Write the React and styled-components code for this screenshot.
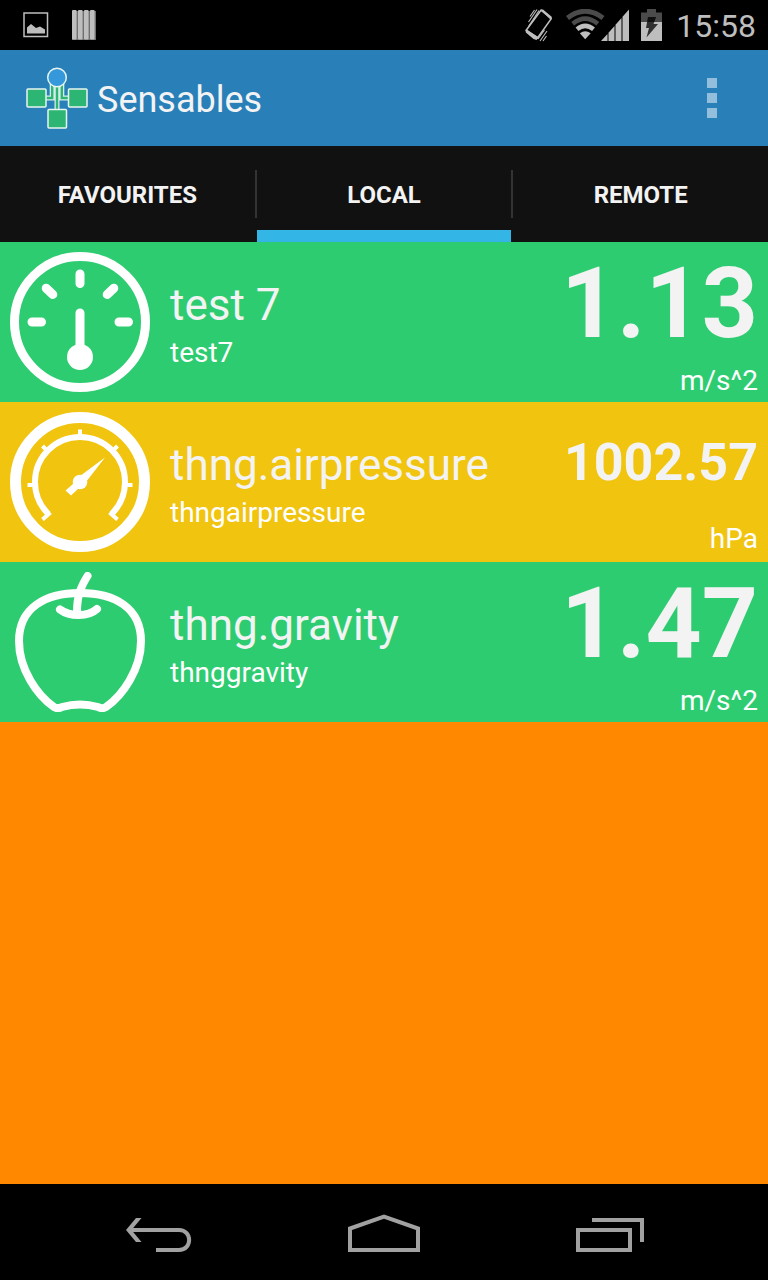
import React from "react";
import styled, { createGlobalStyle } from "styled-components";

const GlobalStyle = createGlobalStyle`
  *, *::before, *::after { box-sizing: border-box; }
  body {
    margin: 0;
    background: #000;
    font-family: Roboto, "Liberation Sans", sans-serif;
    color: #f3f3f3;
  }
  h1, h2, p, ul { margin: 0; padding: 0; }
  button { font: inherit; color: inherit; border: 0; padding: 0; background: none; cursor: pointer; }
  svg { display: block; flex: none; }
`;

const Screen = styled.div`
  display: flex;
  flex-direction: column;
  min-height: 100vh;
`;

const StatusBar = styled.header`
  display: flex;
  align-items: center;
  justify-content: space-between;
  height: 50px;
  padding: 0 12px 0 22px;
  background: #000;
  color: #bebebe;
`;

const StatusGroup = styled.div`
  display: flex;
  align-items: center;
  gap: ${(p) => p.$gap}px;
`;

const Clock = styled.time`
  font-size: 32px;
  line-height: 40px;
  padding: 2px 0 0 2px;
`;

const ActionBar = styled.div`
  display: flex;
  align-items: center;
  height: 96px;
  padding: 0 24px;
  background: #2980b9;
`;

const Title = styled.h1`
  flex: 1;
  padding: 4px 0 0 9px;
  font-size: 36px;
  line-height: 44px;
  font-weight: 400;
`;

const OverflowButton = styled.button`
  display: flex;
  flex-direction: column;
  align-items: center;
  gap: 5px;
  width: 64px;
`;

const Dot = styled.span`
  width: 10px;
  height: 10px;
  background: #94bfdc;
`;

const TabBar = styled.nav`
  display: flex;
  align-items: center;
  height: 96px;
  background: #111;
`;

const TabDivider = styled.span`
  width: 2px;
  height: 48px;
  background: #333;
`;

const Tab = styled.button`
  flex: 1 1 0;
  height: 96px;
  padding-top: 14px;
  border-bottom: 12px solid ${(p) => (p.$active ? "#33b5e5" : "transparent")};
  font-size: 24px;
  line-height: 28px;
  font-weight: 700;
  text-transform: uppercase;
`;

const Content = styled.main`
  flex: 1;
  background: #ff8800;
`;

const SensorList = styled.ul`
  list-style: none;
`;

const SensorRow = styled.li`
  display: flex;
  gap: 20px;
  height: 160px;
  padding: 0 10px;
  background: ${(p) => p.$tone};

  > svg { align-self: center; }
`;

const SensorInfo = styled.div`
  flex: 1;
  min-width: 0;
  padding-top: 37px;
`;

const SensorName = styled.h2`
  font-size: 44px;
  line-height: 52px;
  font-weight: 400;
`;

const SensorId = styled.p`
  font-size: 28px;
  line-height: 32px;
  padding-top: 6px;
  color: #fff;
`;

const Reading = styled.div`
  display: flex;
  flex-direction: column;
  align-items: flex-end;
`;

const Value = styled.p`
  font-size: ${(p) => (p.$long ? 52 : 98)}px;
  line-height: ${(p) => (p.$long ? 121 : 123)}px;
  font-weight: 700;
`;

const Unit = styled.p`
  font-size: 28px;
  line-height: 32px;
  color: #fff;
`;

const NavBar = styled.footer`
  display: flex;
  justify-content: center;
  align-items: center;
  gap: 66px;
  height: 96px;
  background: #000;
`;

const NavButton = styled.button`
  display: flex;
  align-items: flex-end;
  justify-content: center;
  width: 160px;
  height: 96px;
  padding-bottom: 28px;
`;

const PictureIcon = () => (
  <svg width="28" height="28" viewBox="0 0 28 28">
    <rect x="2" y="2" width="23.500" height="23.500" fill="none" stroke="#bebebe" strokeWidth="1.500" />
    <path d="M5 22.500V16.500L9 13 14 17 18 15.500 23 18.500V22.500z" fill="#bebebe" />
  </svg>
);

const BarsIcon = () => (
  <svg width="24" height="30" viewBox="0 0 24 30">
    {[0, 6, 12, 18].map((x) => (
      <g key={x}>
        <rect x={x} y="1" width="6" height="29" fill="#6f6f6f" />
        <rect x={x} y="0" width="4.6" height="29.5" rx="1" fill="#bebebe" />
      </g>
    ))}
  </svg>
);

const VibrateIcon = () => (
  <svg width="30" height="34" viewBox="0 0 30 34">
    <path d="M17 2.2 27.3 10.6 13.5 30 2 22.5z" fill="none" stroke="#bebebe" strokeWidth="1.6" strokeLinejoin="round" />
    <path d="M16.5 1.5 19 1.5 28 9 26.5 11.5zM2 21 15 29.5 12.5 32 9.5 31 1.8 24.5z" fill="#bebebe" />
    <path d="M4.5 14 13 1.5M6 8.5 10.5 2M4.8 18 15 2.5M16 33 23 23M19 33 22.5 28M14 31 20.5 22" stroke="#bebebe" strokeWidth="1.1" />
  </svg>
);

const NetworkIcon = () => (
  <svg width="63" height="32" viewBox="0 0 63 32">
    <g fill="none" stroke="#4b4b4b">
      <path d="M1.500 9Q19.200-4.500 37 9" strokeWidth="5" />
      <path d="M6.700 14.700Q19.200 4.500 31.800 14.700" strokeWidth="4.500" />
    </g>
    <path d="M11 20.300Q19.200 13.500 27.500 20.300" fill="none" stroke="#bebebe" strokeWidth="4.500" />
    <path d="M13.800 24.300Q19.200 20 24.700 24.300L19.200 30.300z" fill="#bebebe" />
    <path d="M35 32 41.500 25V32zM42.500 32V23.800L48.500 17V32zM49.500 32V15.800L55.500 9V32zM56.500 32V7.800L63 .500V32z" fill="#bebebe" />
  </svg>
);

const BatteryIcon = () => (
  <svg width="21" height="32" viewBox="0 0 21 32">
    <path d="M0 13V3.500H6V0H15V3.500H21V13z" fill="#4b4b4b" />
    <path d="M0 13H21V32H0z" fill="#bebebe" />
    <path d="M7 8H15L12.500 15H17L5.500 28.500 8 19H5z" fill="#303030" />
    <path d="M7 8H15L13.200 13H6.300z" fill="#111" />
  </svg>
);

const AppLogo = () => (
  <svg width="64" height="64" viewBox="0 0 64 64">
    <g fill="none" stroke="#d6ece8" strokeWidth="5">
      <path d="M28.200 18V32H20M37.800 18V32H46M33 18V44" />
    </g>
    <g fill="none" stroke="#2db673" strokeWidth="2.400">
      <path d="M28.200 18V32H20M37.800 18V32H46M33 18V44" />
    </g>
    <g fill="#2db673" stroke="#e8f5ef" strokeWidth="1.500">
      <rect x="3" y="23" width="19" height="18" rx="1" />
      <rect x="44.500" y="23" width="18.500" height="18" rx="1" />
      <rect x="24" y="43.500" width="18.500" height="18.500" rx="1" />
      <circle cx="33" cy="11.500" r="9.300" fill="#3498db" />
    </g>
  </svg>
);

const DialIcon = () => (
  <svg width="140" height="140" viewBox="0 0 140 140" fill="none" stroke="#fff">
    <circle cx="70" cy="70" r="65.500" strokeWidth="9" />
    <path
      d="M70 22V31.500M36.200 36.200 42.800 42.500M103.800 36.200 97.200 42.500M22 70H31.500M109 70H118.500M70 61V100"
      strokeWidth="9"
      strokeLinecap="round"
    />
    <circle cx="70" cy="105" r="13" fill="#fff" stroke="none" />
  </svg>
);

const BarometerIcon = () => (
  <svg width="140" height="140" viewBox="0 0 140 140" fill="none" stroke="#fff">
    <circle cx="70" cy="70" r="64.500" strokeWidth="11" />
    <path d="M38.200 101.800A45 45 0 1 1 101.800 101.800" strokeWidth="6" />
    <path
      d="M70 17.500V25M32.500 34 38 39.500M107.500 34 102 39.500M17.500 73H25M115 73H122.500M32.500 107.500 40.500 100.500M107.500 107.500 99.500 100.500"
      strokeWidth="4"
    />
    <circle cx="70" cy="70" r="7.300" fill="#fff" stroke="none" />
    <path d="M70 64 95 45.500 76 70zM63.500 71.500 68.500 76.500 61 83.500 55.500 78.500z" fill="#fff" stroke="none" />
  </svg>
);

const AppleIcon = () => (
  <svg width="140" height="140" viewBox="0 0 140 140" fill="none" stroke="#fff" strokeWidth="8" strokeLinecap="round" strokeLinejoin="round">
    <path d="M70 21C105 21 131 36 131 69C131 98 112 124 96 135C93 137 90 136 88 135Q70 130 52 135C50 136 47 137 44 135C28 124 9 98 9 69C9 36 35 21 70 21z" />
    <path d="M77.500 4C70 16 67 25 67 40M50 37.500C60 45 78 45 87 37" />
  </svg>
);

const BackIcon = () => (
  <svg width="68" height="36" viewBox="0 0 68 36" fill="none" stroke="#a1a1a1" strokeWidth="4">
    <path d="M7 14H55C68.500 14 68.500 34 55 34H32" />
    <path d="M2 14 12 2H17.500L7.500 14 17.500 26H12z" fill="#a1a1a1" stroke="none" />
  </svg>
);

const HomeIcon = () => (
  <svg width="72" height="38" viewBox="0 0 72 38" fill="none" stroke="#a1a1a1" strokeWidth="4">
    <path d="M2 36V14.500L36 2.500 70 14.500V36z" />
  </svg>
);

const RecentsIcon = () => (
  <svg width="68" height="34" viewBox="0 0 68 34" fill="none" stroke="#a1a1a1" strokeWidth="4">
    <path d="M16 2H66V24M2 12H54V32H2z" />
  </svg>
);

const TABS = ["Favourites", "Local", "Remote"];

const SENSORS = [
  { name: "test 7", id: "test7", value: "1.13", unit: "m/s^2", tone: "#2ecc71", Icon: DialIcon },
  { name: "thng.airpressure", id: "thngairpressure", value: "1002.57", unit: "hPa", tone: "#f1c40f", Icon: BarometerIcon },
  { name: "thng.gravity", id: "thnggravity", value: "1.47", unit: "m/s^2", tone: "#2ecc71", Icon: AppleIcon },
];

export default function App() {
  return (
    <Screen>
      <GlobalStyle />
      <StatusBar>
        <StatusGroup $gap={22}>
          <PictureIcon />
          <BarsIcon />
        </StatusGroup>
        <StatusGroup $gap={12}>
          <VibrateIcon />
          <NetworkIcon />
          <BatteryIcon />
          <Clock>15:58</Clock>
        </StatusGroup>
      </StatusBar>
      <ActionBar>
        <AppLogo />
        <Title>Sensables</Title>
        <OverflowButton aria-label="More options">
          <Dot />
          <Dot />
          <Dot />
        </OverflowButton>
      </ActionBar>
      <TabBar>
        {TABS.map((label, i) => (
          <React.Fragment key={label}>
            {i > 0 && <TabDivider />}
            <Tab $active={label === "Local"}>{label}</Tab>
          </React.Fragment>
        ))}
      </TabBar>
      <Content>
        <SensorList>
          {SENSORS.map(({ name, id, value, unit, tone, Icon }) => (
            <SensorRow key={id} $tone={tone}>
              <Icon />
              <SensorInfo>
                <SensorName>{name}</SensorName>
                <SensorId>{id}</SensorId>
              </SensorInfo>
              <Reading>
                <Value $long={value.length > 4}>{value}</Value>
                <Unit>{unit}</Unit>
              </Reading>
            </SensorRow>
          ))}
        </SensorList>
      </Content>
      <NavBar>
        <NavButton aria-label="Back">
          <BackIcon />
        </NavButton>
        <NavButton aria-label="Home">
          <HomeIcon />
        </NavButton>
        <NavButton aria-label="Recent apps">
          <RecentsIcon />
        </NavButton>
      </NavBar>
    </Screen>
  );
}
